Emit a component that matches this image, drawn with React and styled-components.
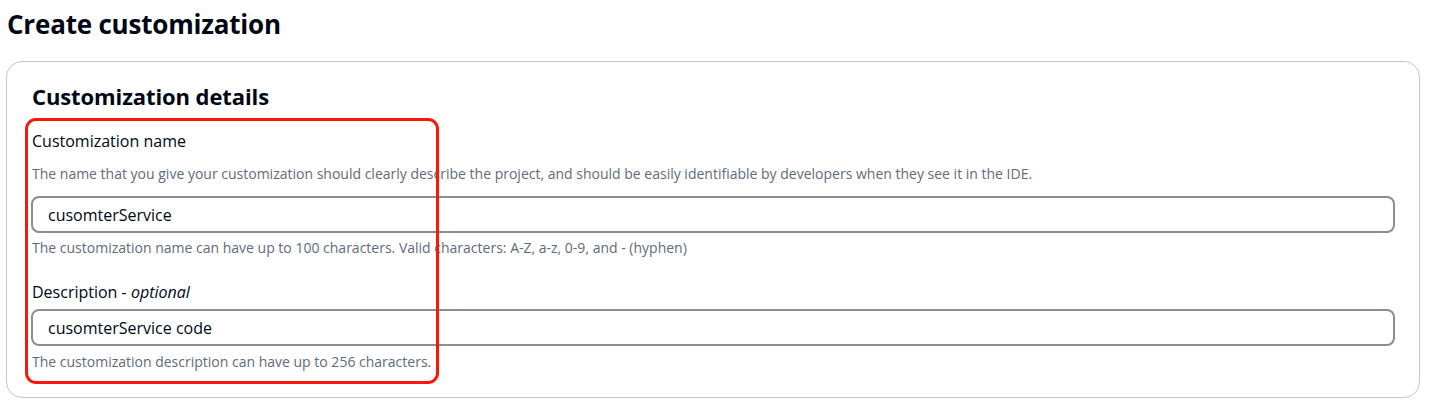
import React from "react";
import styled, { createGlobalStyle } from "styled-components";

const Global = createGlobalStyle`
  html, body { margin: 0; padding: 0; background: #ffffff; }
  body { font-family: "Open Sans", "Noto Sans", Arial, sans-serif; color: #000716; }
  * { box-sizing: border-box; }
`;

const Page = styled.div`
  width: 1431px;
  height: 411px;
  padding: 6px 12px 0 6px;
  display: flex;
  flex-direction: column;
`;

const Title = styled.h1`
  margin: 0 0 0 1px;
  font-size: 26px;
  line-height: 36px;
  font-weight: 700;
  letter-spacing: -0.2px;
  color: #000716;
`;

const Card = styled.section`
  margin-top: 19px;
  width: 1414px;
  height: 337px;
  border: 1px solid #c6c6cd;
  border-radius: 16px;
  padding: 18px 24px 0 24px;
  display: flex;
  flex-direction: column;
`;

const CardTitle = styled.h2`
  margin: 0 0 0 1px;
  font-size: 22px;
  line-height: 32px;
  font-weight: 700;
  letter-spacing: -0.1px;
  color: #000716;
`;

const Fields = styled.div`
  position: relative;
  margin-top: 18px;
  display: flex;
  flex-direction: column;
  gap: 23px;
`;

const Field = styled.div`
  display: flex;
  flex-direction: column;
`;

const Label = styled.label`
  font-size: 16px;
  line-height: 22px;
  color: #000716;
  padding-left: 1px;
  em { font-style: italic; }
`;

const Hint = styled.div`
  font-size: 14px;
  line-height: 20px;
  color: #5f6b7a;
  padding-left: 1px;
  margin-top: ${(p) => p.$top || 0}px;
`;

const Input = styled.input`
  display: block;
  width: 1364px;
  height: 37px;
  margin-top: ${(p) => p.$top || 0}px;
  border: 2px solid #8c8c94;
  border-radius: 8px;
  padding: 0 15px;
  font-family: inherit;
  font-size: 16px;
  color: #000716;
  background: #fff;
  outline: none;
`;

const Highlight = styled.div`
  position: absolute;
  left: -6px;
  top: -12px;
  width: 414px;
  height: 266px;
  border: 3px solid #f5190a;
  border-radius: 11px;
  pointer-events: none;
`;

export default function App() {
  return (
    <Page>
      <Global />
      <Title>Create customization</Title>
      <Card>
        <CardTitle>Customization details</CardTitle>
        <Fields>
          <Field>
            <Label>Customization name</Label>
            <Hint $top={12}>
              The name that you give your customization should clearly describe the project, and should be easily identifiable by developers when they see it in the IDE.
            </Hint>
            <Input $top={12} defaultValue="cusomterService" />
            <Hint $top={5}>
              The customization name can have up to 100 characters. Valid characters: A-Z, a-z, 0-9, and - (hyphen)
            </Hint>
          </Field>
          <Field>
            <Label>
              Description - <em>optional</em>
            </Label>
            <Input $top={6} defaultValue="cusomterService code" />
            <Hint $top={6}>The customization description can have up to 256 characters.</Hint>
          </Field>
          <Highlight />
        </Fields>
      </Card>
    </Page>
  );
}
